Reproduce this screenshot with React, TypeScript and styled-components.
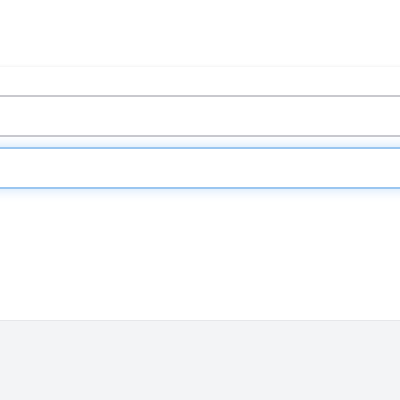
import styled, { createGlobalStyle } from "styled-components";

const GlobalStyle = createGlobalStyle`
  html, body {
    margin: 0;
    padding: 0;
    background: #ffffff;
    font-family: "Inter", "Liberation Sans", sans-serif;
  }
`;

const Page = styled.div`
  display: flex;
  flex-direction: column;
  height: 400px;
  overflow: hidden;
`;

const Content = styled.div`
  height: 320px;
  padding-top: 67px;
  box-sizing: border-box;
  background: #ffffff;
`;

const Stack = styled.div`
  display: flex;
  flex-direction: column;
  margin: 0 -12px;
`;

const Field = styled.input<{ $h: number; $first?: boolean }>`
  display: block;
  box-sizing: border-box;
  width: 100%;
  height: ${(p) => p.$h}px;
  margin: 0;
  padding: 0 16px;
  border: none;
  border-bottom: 2px solid #c9c9ce;
  background: #ffffff;
  outline: none;
  font: inherit;
  box-shadow: ${(p) => (p.$first ? "0 -1px 3px rgba(0, 0, 0, 0.05)" : "none")};
`;

const Focused = styled.input`
  display: block;
  box-sizing: border-box;
  width: 100%;
  height: 42px;
  margin-top: 10px;
  padding: 0 16px;
  border: 2px solid #9ac6f0;
  background: #ffffff;
  outline: none;
  font: inherit;
  box-shadow: 0 0 10px 2px rgba(120, 180, 240, 0.3);
`;

const Footer = styled.div`
  flex: 1;
  background: #f3f4f6;
  border-top: 1px solid #e6e7ea;
`;

export default function App() {
  return (
    <>
      <GlobalStyle />
      <Page>
        <Content>
          <Stack>
            <Field $h={30} $first aria-label="field one" />
            <Field $h={40} aria-label="field two" />
            <Focused aria-label="field three" />
          </Stack>
        </Content>
        <Footer />
      </Page>
    </>
  );
}
